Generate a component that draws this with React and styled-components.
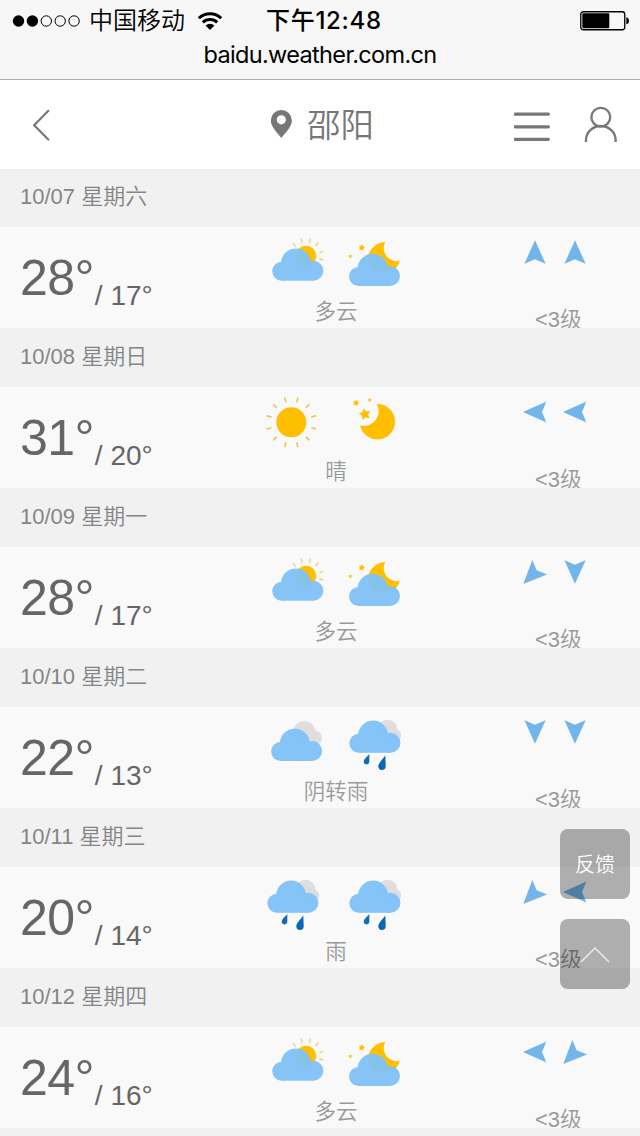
import React from "react";
import styled, { createGlobalStyle } from "styled-components";

const GlobalStyle = createGlobalStyle`
  * { box-sizing: border-box; }
  html, body { margin: 0; padding: 0; background: #f1f1f1; }
  body { font-family: "Liberation Sans", "Noto Sans CJK SC", sans-serif; }
  svg { display: block; }
`;

const Screen = styled.div`
  width: 640px;
  height: 1136px;
  overflow: hidden;
  position: relative;
  background: #f1f1f1;
`;

const BrowserBar = styled.div`
  height: 80px;
  background: #f7f7f7;
  border-bottom: 1px solid #b0b0b0;
  color: #000;
  font-family: Inter, "Noto Sans CJK SC", sans-serif;
`;

const StatusRow = styled.div`
  display: grid;
  grid-template-columns: 254px 140px 1fr;
  align-items: center;
  height: 41px;
`;

const Carrier = styled.div`
  display: flex;
  align-items: center;
  padding-left: 12px;
  font-size: 24px;
  line-height: 40px;
`;

const CarrierName = styled.span`
  margin: 0 12px 0 8px;
  padding-top: 1px;
  white-space: nowrap;
  font-weight: 350;
`;

const Clock = styled.div`
  padding: 1px 0 0 12px;
  font-size: 24px;
  line-height: 40px;
  font-weight: 500;
  letter-spacing: 0.7px;
  white-space: nowrap;
`;

const BatterySlot = styled.div`
  display: flex;
  justify-content: flex-end;
  padding-right: 10px;
`;

const Address = styled.div`
  text-align: center;
  font-size: 23.5px;
  line-height: 28px;
  letter-spacing: -0.65px;
`;

const Header = styled.header`
  display: flex;
  align-items: center;
  height: 89px;
  padding: 0 22px 0 32px;
  background: #fff;
  color: #777;
`;

const Title = styled.div`
  flex: 1;
  display: flex;
  align-items: center;
  padding-left: 220px;
  gap: 15px;
  font-size: 33.5px;
  font-weight: 350;
  line-height: 50px;
`;

const City = styled.span`
  padding-top: 3px;
`;

const Actions = styled.div`
  display: flex;
  align-items: center;
  gap: 32px;
`;

const DateBar = styled.div`
  height: ${(p) => (p.$first ? 58 : 59)}px;
  padding: ${(p) => (p.$first ? 12 : 13)}px 20px 0;
  background: #f1f1f1;
  color: #858585;
  font-size: 22px;
  line-height: 32px;
  font-weight: 350;
`;

const Forecast = styled.div`
  display: grid;
  grid-template-columns: 262px 144px 1fr;
  height: 101px;
  overflow: hidden;
  background: #f9f9f9;
`;

const Temperatures = styled.div`
  display: flex;
  align-items: flex-start;
  padding-left: 20px;
  color: #666;
  white-space: nowrap;
`;

const High = styled.span`
  font-size: 50px;
  line-height: 58px;
  padding-top: 22px;
  letter-spacing: -0.6px;
`;

const Low = styled.span`
  font-size: 28px;
  line-height: 32px;
  padding-top: 53px;
  margin-left: 1px;
`;

const Sky = styled.div`
  padding-top: 8px;
`;

const IconPair = styled.div`
  display: flex;
  gap: 20px;
`;

const Condition = styled.div`
  width: 148px;
  text-align: center;
  color: #999;
  font-size: 21.5px;
  font-weight: 350;
  line-height: 32px;
  margin-top: 4px;
`;

const Wind = styled.div`
  padding: 13px 0 0 117px;
`;

const Arrows = styled.div`
  display: flex;
  gap: 16px;
`;

const WindLevel = styled.div`
  margin: 40px 0 0 12px;
  color: #999;
  font-size: 22px;
  font-weight: 350;
  line-height: 32px;
`;

const FloatingButtons = styled.div`
  position: absolute;
  top: 829px;
  right: 10px;
  display: flex;
  flex-direction: column;
  gap: 20px;
`;

const FloatingButton = styled.button`
  display: flex;
  align-items: center;
  justify-content: center;
  width: 70px;
  height: 70px;
  padding: 1px 0 0;
  border: 0;
  border-radius: 8px;
  background: rgba(0, 0, 0, 0.3);
  color: #fff;
  font: 350 20px/30px "Liberation Sans", "Noto Sans CJK SC", sans-serif;
`;

const GOLD = "#ffbf00";

function starPoints(cx, cy, r, turn = 0) {
  return Array.from({ length: 10 }, (_, i) => {
    const a = ((i * 36 - 90 + turn) * Math.PI) / 180;
    const d = i % 2 ? r * 0.52 : r;
    return `${(cx + d * Math.cos(a)).toFixed(2)},${(cy + d * Math.sin(a)).toFixed(2)}`;
  }).join(" ");
}

const Star = ({ x, y, r, turn }) => (
  <polygon points={starPoints(x, y, r, turn)} fill={GOLD} stroke={GOLD} strokeWidth=".7" strokeLinejoin="round" />
);

const Cloud = ({ x = 0, y = 0 }) => (
  <g transform={`translate(${x} ${y})`} opacity=".95" fill="#80c2f7">
    <circle cx="19.8" cy="36.2" r="9.5" />
    <circle cx="34" cy="28.4" r="15" />
    <circle cx="51.3" cy="35.7" r="10" />
    <rect x="19.8" y="30" width="31.5" height="15.7" />
  </g>
);

const Canvas = ({ children }) => (
  <svg width="62" height="57" viewBox="0 0 62 57">{children}</svg>
);

const CloudyDay = () => (
  <Canvas>
    <path
      d="M31 8l2.7 4M39.3 3.7l1 4.3M48.3 3.7L47.5 8M56.3 7.7l-3 3.6M61.3 16l-4 2M57.3 24l3.8 1"
      stroke="#f3cc61"
      strokeWidth="1.3"
      fill="none"
    />
    <circle cx="44" cy="21" r="10.3" fill={GOLD} />
    <Cloud />
  </Canvas>
);

const CloudyNight = () => (
  <Canvas>
    <path
      d="M41.3 7C34 7.3 27 12 24.3 20C22 30 30 38 41 38C48 37.5 54 33 55.7 26C45 27.5 36 17.5 41.3 7Z"
      fill={GOLD}
    />
    <Star x={17.7} y={12.7} r={2.9} turn={12} />
    <Star x={6.3} y={21.3} r={1.5} />
    <Cloud x={-5.3} y={5.3} />
  </Canvas>
);

const Sunny = () => (
  <Canvas>
    <circle cx="29.3" cy="27.3" r="15" fill={GOLD} />
    {Array.from({ length: 12 }, (_, i) => (
      <path
        key={i}
        d="M29.3 6.7V1.7"
        stroke="#f2c044"
        strokeWidth="1.5"
        transform={`rotate(${15 + i * 30} 29.3 27.3)`}
      />
    ))}
  </Canvas>
);

const ClearNight = () => (
  <Canvas>
    <path d="M32.8 9A17.7 17.7 0 1 1 16 30.3A14.6 14.6 0 0 0 32.8 9Z" fill={GOLD} />
    <Star x={21} y={19.3} r={5.5} turn={-12} />
    <Star x={12} y={7.9} r={2.9} turn={12} />
    <Star x={25.7} y={5} r={1.5} />
  </Canvas>
);

const Overcast = () => (
  <Canvas>
    <circle cx="42.3" cy="17" r="11" fill="#dfdddd" />
    <circle cx="52.8" cy="22.8" r="7.2" fill="#dfdddd" />
    <Cloud x={-1.2} y={0.3} />
  </Canvas>
);

const Rain = () => (
  <Canvas>
    <circle cx="43.5" cy="14.5" r="9.8" fill="#dfdddd" />
    <circle cx="50.4" cy="20.5" r="6.8" fill="#dfdddd" />
    <Cloud x={-4.9} y={-7.9} />
    <path d="M25.3 39C23.4 41.5 19.7 44 19.7 46.6A2.8 2.8 0 0 0 25.3 46.6Z" fill="#1469b1" />
    <path d="M41.3 40.5C39 44 34.3 48 34.3 51.3A3.7 3.7 0 0 0 41.7 51.3Z" fill="#0868b8" />
  </Canvas>
);

const ICONS = {
  cloudyDay: CloudyDay,
  cloudyNight: CloudyNight,
  sunny: Sunny,
  clearNight: ClearNight,
  overcast: Overcast,
  rain: Rain,
};

const ARROWS = {
  up: "12,.3 22.6,23.7 12,19.3 1.4,23.7",
  down: "12,23.7 22.6,.3 12,4.7 1.4,.3",
  left: "0,12 23.4,1.4 19,12 23.4,22.6",
  southWest: ".3,24 9.3,0 13.7,10.2 24,14.4",
};

const Arrow = ({ to }) => (
  <svg width="24" height="24" viewBox="0 0 24 24">
    <polygon points={ARROWS[to]} fill="#71b5ea" />
  </svg>
);

const DAYS = [
  { date: "10/07 星期六", high: 28, low: 17, icons: ["cloudyDay", "cloudyNight"], text: "多云", wind: ["up", "up"] },
  { date: "10/08 星期日", high: 31, low: 20, icons: ["sunny", "clearNight"], text: "晴", wind: ["left", "left"] },
  { date: "10/09 星期一", high: 28, low: 17, icons: ["cloudyDay", "cloudyNight"], text: "多云", wind: ["southWest", "down"] },
  { date: "10/10 星期二", high: 22, low: 13, icons: ["overcast", "rain"], text: "阴转雨", wind: ["down", "down"] },
  { date: "10/11 星期三", high: 20, low: 14, icons: ["rain", "rain"], text: "雨", wind: ["southWest", "left"] },
  { date: "10/12 星期四", high: 24, low: 16, icons: ["cloudyDay", "cloudyNight"], text: "多云", wind: ["left", "southWest"] },
];

function Day({ day, first }) {
  return (
    <section>
      <DateBar $first={first}>{day.date}</DateBar>
      <Forecast>
        <Temperatures>
          <High>{day.high}°</High>
          <Low>/ {day.low}°</Low>
        </Temperatures>
        <Sky>
          <IconPair>
            {day.icons.map((name, i) => {
              const Icon = ICONS[name];
              return <Icon key={i} />;
            })}
          </IconPair>
          <Condition>{day.text}</Condition>
        </Sky>
        <Wind>
          <Arrows>
            {day.wind.map((to, i) => (
              <Arrow key={i} to={to} />
            ))}
          </Arrows>
          <WindLevel>&lt;3级</WindLevel>
        </Wind>
      </Forecast>
    </section>
  );
}

const Signal = () => (
  <svg width="69" height="14" viewBox="0 0 69 14">
    {[0, 1, 2, 3, 4].map((i) => (
      <circle
        key={i}
        cx={6.5 + i * 13.9}
        cy="7"
        r={i < 2 ? 5.7 : 5.2}
        fill={i < 2 ? "#000" : "none"}
        stroke={i < 2 ? "none" : "#000"}
      />
    ))}
  </svg>
);

const Wifi = () => (
  <svg width="26" height="20" viewBox="0 0 26 20">
    <path d="M1.8 7.2A16 16 0 0 1 24.2 7.2M5.8 11.4A10.4 10.4 0 0 1 20.2 11.4" fill="none" stroke="#000" strokeWidth="3" />
    <path d="M8.6 14.6A6.4 6.4 0 0 1 17.4 14.6L13 19Z" />
  </svg>
);

const Battery = () => (
  <svg width="50" height="20" viewBox="0 0 50 20">
    <rect x=".75" y=".75" width="44" height="18" rx="2.5" fill="none" stroke="#000" strokeWidth="1.3" />
    <rect x="2.3" y="2.3" width="27" height="15" rx="1" />
    <path d="M46.3 6.3Q49 6.8 49 9.8T46.3 13.3Z" />
  </svg>
);

export default function App() {
  return (
    <Screen>
      <GlobalStyle />
      <BrowserBar>
        <StatusRow>
          <Carrier>
            <Signal />
            <CarrierName>中国移动</CarrierName>
            <Wifi />
          </Carrier>
          <Clock>下午12:48</Clock>
          <BatterySlot>
            <Battery />
          </BatterySlot>
        </StatusRow>
        <Address>baidu.weather.com.cn</Address>
      </BrowserBar>
      <Header>
        <svg width="18" height="32" viewBox="0 0 18 32">
          <path d="M16.3 1.8L2.2 16.2L16.3 30.5" fill="none" stroke="#777" strokeWidth="2.2" strokeLinecap="round" />
        </svg>
        <Title>
          <svg width="22" height="32" viewBox="0 0 22 32">
            <path
              fillRule="evenodd"
              fill="#777"
              d="M11.3 1A10.6 10.6 0 0 0 .8 11.5C.8 18 8 24.5 11.3 29C14.7 24.5 21.9 18 21.9 11.5A10.6 10.6 0 0 0 11.3 1ZM11.3 6.2a4.6 4.6 0 1 1 0 9.2a4.6 4.6 0 1 1 0-9.2Z"
            />
          </svg>
          <City>邵阳</City>
        </Title>
        <Actions>
          <svg width="38" height="32" viewBox="0 0 38 32">
            <path d="M1.2 5.2h33.2M1.2 17.8h33.2M1.2 30.3h33.2" stroke="#777" strokeWidth="3.2" strokeLinecap="round" />
          </svg>
          <svg width="34" height="40" viewBox="0 0 34 40">
            <circle cx="16.8" cy="12.2" r="9.4" fill="none" stroke="#777" strokeWidth="2.3" />
            <path d="M2 37V35A14.8 14 0 0 1 31.6 35V37" fill="none" stroke="#777" strokeWidth="2.3" />
          </svg>
        </Actions>
      </Header>
      {DAYS.map((day, i) => (
        <Day key={day.date} day={day} first={i === 0} />
      ))}
      <FloatingButtons>
        <FloatingButton>反馈</FloatingButton>
        <FloatingButton aria-label="顶部">
          <svg width="30" height="18" viewBox="0 0 30 18">
            <path d="M1 16L15 2L29 16" fill="none" stroke="#e9e9e9" strokeWidth="1.5" />
          </svg>
        </FloatingButton>
      </FloatingButtons>
    </Screen>
  );
}
